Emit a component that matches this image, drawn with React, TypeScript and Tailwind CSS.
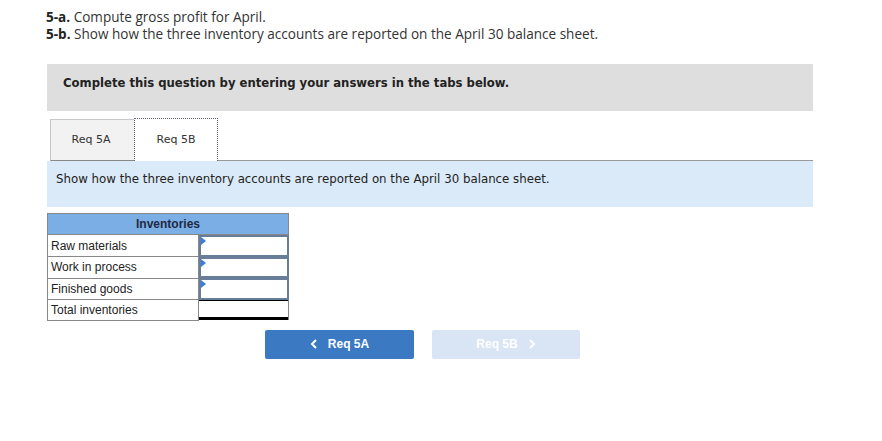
import React from "react";

const Tri = () => (
  <span className="absolute left-0 top-0 w-0 h-0 border-t-[4px] border-b-[4px] border-l-[5px] border-t-transparent border-b-transparent border-l-[#3b7ddd]" />
);

function InputCell() {
  return (
    <td className="p-0 border-l border-[#888] h-[21.5px]">
      <div className="relative h-[21.5px] border-2 border-[#687d99] bg-white">
        <Tri />
      </div>
    </td>
  );
}

export default function App() {
  const rows = ["Raw materials", "Work in process", "Finished goods"];
  return (
    <div className="w-[882px] h-[441px] bg-white overflow-hidden">
      <div className="pt-[9px] pl-[46px] text-[13.55px] leading-[17px] text-[#333] font-['Open_Sans',Arial,sans-serif]">
        <div>
          <b className="text-[#222]">5-a.</b> Compute gross profit for April.
        </div>
        <div>
          <b className="text-[#222]">5-b.</b> Show how the three inventory accounts are reported on the April 30 balance sheet.
        </div>
      </div>

      <div className="ml-[47px] w-[766px] mt-[21px]">
        <div className="h-[47px] bg-[#dedede] pl-[16px] pt-[11px] font-['DejaVu_Sans',Verdana,sans-serif] font-bold text-[11.65px] text-[#222]">
          Complete this question by entering your answers in the tabs below.
        </div>

        <div className="mt-[7px] flex items-end h-[43px] pl-[3px] font-['DejaVu_Sans',Verdana,sans-serif] text-[11px] text-[#333]">
          <div className="w-[86px] h-[42px] bg-[#f2f2f2] border border-[#c8c8c8] border-b-[#888] flex items-center justify-center pr-[4px]">
            Req 5A
          </div>
          <div className="w-[84px] h-[43px] -ml-[2px] bg-white border border-dotted border-b-0 border-[#667] flex items-center justify-center">
            Req 5B
          </div>
          <div className="flex-1 border-b border-[#999] h-[43px]" />
        </div>

        <div className="h-[46px] bg-[#dbeaf8] pl-[9px] pt-[10px] font-['DejaVu_Sans',Verdana,sans-serif] text-[11.8px] text-[#222]">
          Show how the three inventory accounts are reported on the April 30 balance sheet.
        </div>

        <table className="mt-[6px] border-collapse w-[242px] font-['Liberation_Sans',Arial,sans-serif] text-[12px] text-[#222]">
          <thead>
            <tr>
              <th colSpan={2} className="h-[21px] bg-[#7baee4] border border-[#888] font-bold text-[12px] text-[#1f2a44] p-0">
                Inventories
              </th>
            </tr>
          </thead>
          <tbody>
            {rows.map((r) => (
              <tr key={r}>
                <td className="w-[151px] h-[21.5px] border border-[#888] pl-[3px] py-0 font-normal">{r}</td>
                <InputCell />
              </tr>
            ))}
            <tr>
              <td className="w-[151px] h-[20.5px] border border-[#888] pl-[3px] py-0">Total inventories</td>
              <td className="p-0 border-l border-[#888] border-r border-r-[#888]">
                <div className="h-[20.5px] border-t border-black border-b-[3px] border-b-black bg-white" />
              </td>
            </tr>
          </tbody>
        </table>

        <div className="mt-[9px] ml-[218px] flex gap-[18px] font-['Liberation_Sans',Arial,sans-serif] font-bold text-[12px]">
          <div className="w-[149px] h-[29px] rounded-[2px] bg-[#3b79c2] text-white flex items-center justify-center gap-[10px]">
            <svg width="8" height="10" viewBox="0 0 8 10"><path d="M6 1 L2 5 L6 9" stroke="white" strokeWidth="2" fill="none" /></svg>
            <span>Req 5A</span>
          </div>
          <div className="w-[148px] h-[29px] rounded-[2px] bg-[#d9e5f4] text-white flex items-center justify-center gap-[10px]">
            <span>Req 5B</span>
            <svg width="8" height="10" viewBox="0 0 8 10"><path d="M2 1 L6 5 L2 9" stroke="white" strokeWidth="2" fill="none" /></svg>
          </div>
        </div>
      </div>
    </div>
  );
}
